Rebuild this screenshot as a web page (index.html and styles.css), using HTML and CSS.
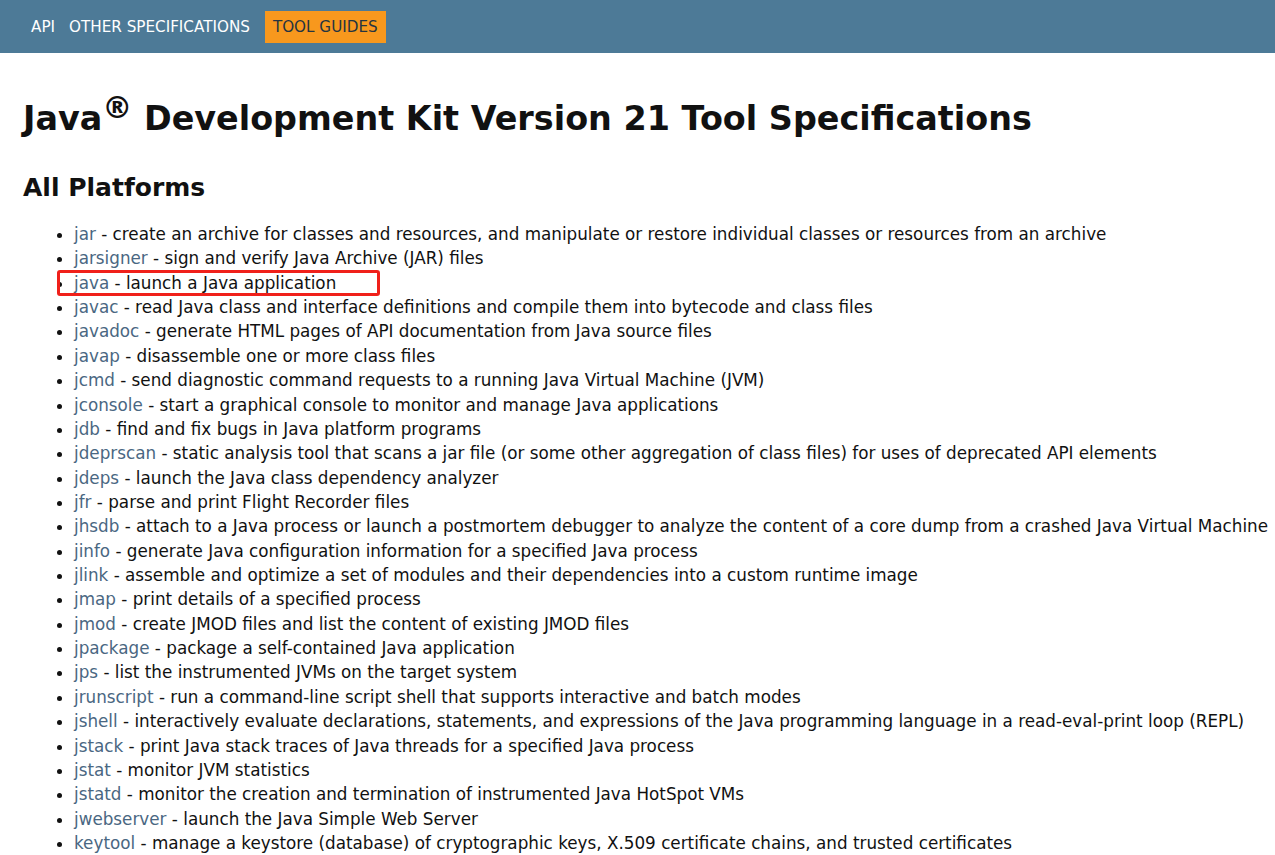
FILE: index.html
```html
<!DOCTYPE html>
<html>
<head>
<meta charset="utf-8">
<link rel="stylesheet" href="styles.css">
</head>
<body>
<header class="topnav">
  <ul class="navlist">
    <li><a href="#">API</a></li>
    <li><a href="#">OTHER SPECIFICATIONS</a></li>
    <li class="current">TOOL GUIDES</li>
  </ul>
</header>
<main class="content">
  <h1>Java<sup>®</sup> Development Kit Version 21 Tool Specifications</h1>
  <h2>All Platforms</h2>
  <ul class="tools">
    <li><a href="#">jar</a> - create an archive for classes and resources, and manipulate or restore individual classes or resources from an archive</li>
    <li><a href="#">jarsigner</a> - sign and verify Java Archive (JAR) files</li>
    <li class="marked"><a href="#">java</a> - launch a Java application<span class="highlight"></span></li>
    <li><a href="#">javac</a> - read Java class and interface definitions and compile them into bytecode and class files</li>
    <li><a href="#">javadoc</a> - generate HTML pages of API documentation from Java source files</li>
    <li><a href="#">javap</a> - disassemble one or more class files</li>
    <li><a href="#">jcmd</a> - send diagnostic command requests to a running Java Virtual Machine (JVM)</li>
    <li><a href="#">jconsole</a> - start a graphical console to monitor and manage Java applications</li>
    <li><a href="#">jdb</a> - find and fix bugs in Java platform programs</li>
    <li><a href="#">jdeprscan</a> - static analysis tool that scans a jar file (or some other aggregation of class files) for uses of deprecated API elements</li>
    <li><a href="#">jdeps</a> - launch the Java class dependency analyzer</li>
    <li><a href="#">jfr</a> - parse and print Flight Recorder files</li>
    <li><a href="#">jhsdb</a> - attach to a Java process or launch a postmortem debugger to analyze the content of a core dump from a crashed Java Virtual Machine</li>
    <li><a href="#">jinfo</a> - generate Java configuration information for a specified Java process</li>
    <li><a href="#">jlink</a> - assemble and optimize a set of modules and their dependencies into a custom runtime image</li>
    <li><a href="#">jmap</a> - print details of a specified process</li>
    <li><a href="#">jmod</a> - create JMOD files and list the content of existing JMOD files</li>
    <li><a href="#">jpackage</a> - package a self-contained Java application</li>
    <li><a href="#">jps</a> - list the instrumented JVMs on the target system</li>
    <li><a href="#">jrunscript</a> - run a command-line script shell that supports interactive and batch modes</li>
    <li><a href="#">jshell</a> - interactively evaluate declarations, statements, and expressions of the Java programming language in a read-eval-print loop (REPL)</li>
    <li><a href="#">jstack</a> - print Java stack traces of Java threads for a specified Java process</li>
    <li><a href="#">jstat</a> - monitor JVM statistics</li>
    <li><a href="#">jstatd</a> - monitor the creation and termination of instrumented Java HotSpot VMs</li>
    <li><a href="#">jwebserver</a> - launch the Java Simple Web Server</li>
    <li><a href="#">keytool</a> - manage a keystore (database) of cryptographic keys, X.509 certificate chains, and trusted certificates</li>
  </ul>
</main>
</body>
</html>
```
FILE: styles.css
```css
html, body {
  margin: 0;
  padding: 0;
  background: #ffffff;
}
body {
  font-family: "DejaVu Sans", Verdana, sans-serif;
  color: #111111;
  overflow: hidden;
}
.topnav {
  background: #4d7a97;
  height: 53px;
  display: flex;
  align-items: center;
}
.navlist {
  list-style: none;
  margin: 0;
  padding: 1px 0 0 31px;
  display: flex;
  align-items: center;
  font-size: 15.2px;
  line-height: 16px;
}
.navlist li {
  color: #ffffff;
}
.navlist li a {
  color: #ffffff;
  text-decoration: none;
}
.navlist li + li {
  margin-left: 14px;
}
.navlist .current {
  background: #f8981d;
  color: #253441;
  padding: 8px 8px;
  margin-left: 15px;
}
.content {
  padding: 0 23px;
}
h1 {
  font-size: 33.4px;
  font-weight: bold;
  margin: 46px 0 0 0;
  line-height: 40px;
}
h1 sup {
  font-size: 0.9em;
  line-height: 0;
}
h2 {
  font-size: 25px;
  font-weight: bold;
  margin: 34px 0 0 0;
  line-height: 30px;
}
.tools {
  margin: 19px 0 0 0;
  padding: 0 0 0 51px;
  font-size: 16.8px;
  line-height: 24.36px;
}
.tools li {
  white-space: nowrap;
}
.tools a {
  color: #4a6782;
  text-decoration: none;
}
.marked {
  position: relative;
}
.highlight {
  position: absolute;
  left: -17px;
  top: -1px;
  width: 317px;
  height: 20px;
  border: 3px solid #f0201a;
  border-radius: 3px;
}
```
